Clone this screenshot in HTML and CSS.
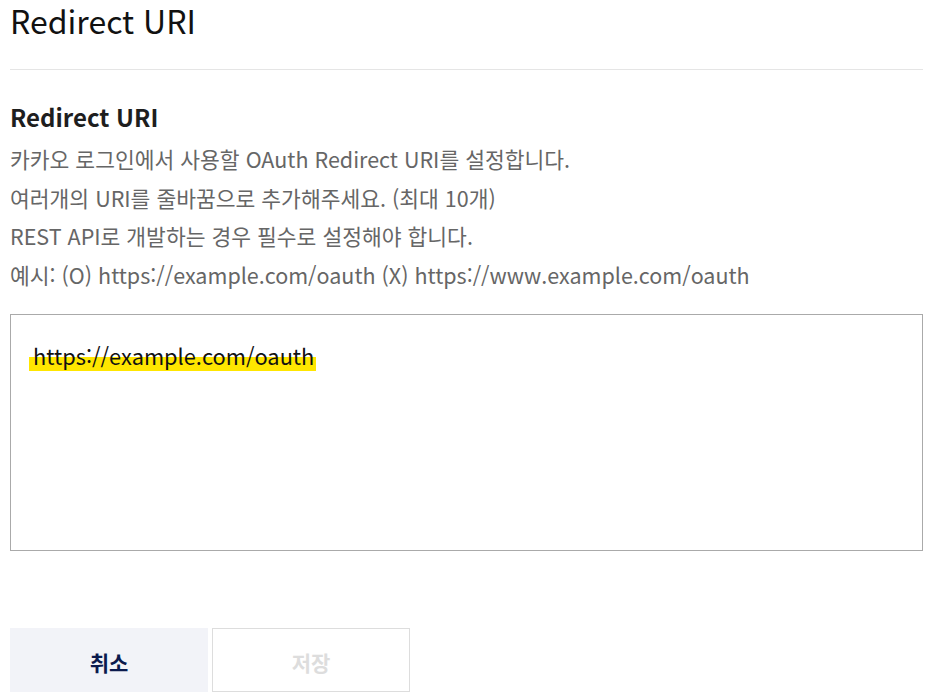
FILE: index.html
```html
<!DOCTYPE html>
<html lang="ko">
<head>
    <meta charset="UTF-8">
    <meta name="viewport" content="width=device-width, initial-scale=1.0">
    <title>Redirect URI</title>
    <link rel="stylesheet" href="styles.css">
</head>
<body>
    <div class="page">
        <h1 class="page-title">Redirect URI</h1>
        <hr class="divider">

        <h2 class="section-title">Redirect URI</h2>
        <div class="desc">
            <p>카카오 로그인에서 사용할 OAuth Redirect URI를 설정합니다.</p>
            <p>여러개의 URI를 줄바꿈으로 추가해주세요. (최대 10개)</p>
            <p>REST API로 개발하는 경우 필수로 설정해야 합니다.</p>
            <p>예시: (O) https://example.com/oauth (X) https://www.example.com/oauth</p>
        </div>

        <div class="uri-box">
            <span class="uri-line">https://example.com/oauth</span>
        </div>

        <div class="actions">
            <button class="btn btn-cancel">취소</button>
            <button class="btn btn-save" disabled>저장</button>
        </div>
    </div>
</body>
</html>
```

FILE: styles.css
```css
body {
    margin: 0;
    font-family: "Noto Sans CJK KR", "Noto Sans", sans-serif;
    background-color: #fff;
    color: #1a1a1a;
}
.page {
    width: 913px;
    padding-left: 10px;
}
.page-title {
    margin: 0;
    font-size: 32px;
    font-weight: 400;
    line-height: 40px;
    color: #111;
}
.divider {
    border: none;
    border-top: 1px solid #e5e5e5;
    margin: 29px 0 0;
}
.section-title {
    margin: 30px 0 0;
    font-size: 24px;
    font-weight: 700;
    line-height: 34px;
    color: #1e1e1e;
}
.desc {
    margin-top: 6px;
}
.desc p {
    margin: 0;
    font-size: 21.5px;
    line-height: 38.5px;
    color: #666;
}
.uri-box {
    margin-top: 20px;
    height: 237px;
    border: 1px solid #aaa;
    padding: 25px 0 0 18px;
    box-sizing: border-box;
}
.uri-line {
    font-size: 21.8px;
    line-height: 32px;
    color: #111;
    background: linear-gradient(to bottom, transparent 55%, #ffe600 55%, #ffe600 100%);
    padding: 0 2px 0 4px;
}
.actions {
    display: flex;
    gap: 4px;
    margin-top: 77px;
}
.btn {
    width: 198px;
    height: 64px;
    padding-top: 4px;
    font-family: inherit;
    font-size: 21px;
    font-weight: 700;
    border: 1px solid transparent;
    cursor: pointer;
}
.btn-cancel {
    background-color: #f2f3f8;
    color: #0b1a4d;
}
.btn-save {
    background-color: #fff;
    border-color: #ddd;
    color: #ddd;
    cursor: default;
}
```
